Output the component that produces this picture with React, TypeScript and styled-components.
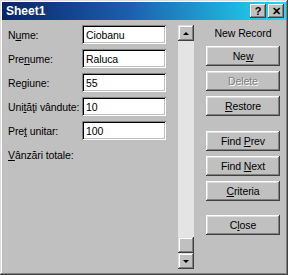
import React from 'react';
import styled, { createGlobalStyle } from 'styled-components';

const GlobalStyle = createGlobalStyle`
  html, body {
    margin: 0;
    padding: 0;
    background: #c0c0c0;
  }
  * {
    box-sizing: border-box;
  }
`;

const Window = styled.div`
  width: 288px;
  height: 275px;
  background: #c0c0c0;
  padding: 2px;
  box-shadow: inset -1px -1px 0 #404040, inset 1px 1px 0 #dfdfdf,
    inset -2px -2px 0 #808080, inset 2px 2px 0 #ffffff;
  font-family: 'Liberation Sans', Arial, sans-serif;
  font-size: 10.5px;
  letter-spacing: -0.1px;
  color: #000;
  display: flex;
  flex-direction: column;
`;

const TitleBar = styled.div`
  height: 18px;
  display: flex;
  align-items: center;
  padding: 0 2px 0 4px;
  background: linear-gradient(to right, #0a246a 0%, #1c5fae 45%, #22dcf4 100%);
`;

const Title = styled.span`
  flex: 1;
  color: #fff;
  font-weight: bold;
  font-size: 12px;
  letter-spacing: 0;
`;

const CaptionButton = styled.div<{ gap?: number }>`
  width: 16px;
  height: 14px;
  background: #c0c0c0;
  box-shadow: inset -1px -1px 0 #404040, inset 1px 1px 0 #ffffff,
    inset -2px -2px 0 #808080;
  display: flex;
  align-items: center;
  justify-content: center;
  font-weight: bold;
  font-size: 11px;
  margin-left: ${(p) => p.gap ?? 0}px;
`;

const Body = styled.div`
  flex: 1;
  display: flex;
  padding: 5px 6px 0 6px;
`;

const Form = styled.div`
  display: grid;
  grid-template-columns: 74px 84px;
  grid-auto-rows: 19px;
  row-gap: 5px;
  align-items: center;
  align-content: start;
  margin-right: 12px;
`;

const Label = styled.span`
  white-space: nowrap;
`;

const Field = styled.div`
  height: 19px;
  background: #fff;
  padding: 0 4px;
  display: flex;
  align-items: center;
  box-shadow: inset 1px 1px 0 #808080, inset -1px -1px 0 #ffffff,
    inset 2px 2px 0 #000000, inset -2px -2px 0 #c0c0c0;
`;

const ScrollBar = styled.div`
  width: 16px;
  height: 244px;
  display: flex;
  flex-direction: column;
  background: #e4e4e4;
  margin-right: 12px;
`;

const ScrollButton = styled.div`
  width: 16px;
  height: 16px;
  flex-shrink: 0;
  background: #c0c0c0;
  box-shadow: inset -1px -1px 0 #404040, inset 1px 1px 0 #dfdfdf,
    inset -2px -2px 0 #808080, inset 2px 2px 0 #ffffff;
  display: flex;
  align-items: center;
  justify-content: center;
`;

const Track = styled.div`
  flex: 1;
`;

const Arrow = styled.div<{ down?: boolean }>`
  width: 0;
  height: 0;
  border-left: 3px solid transparent;
  border-right: 3px solid transparent;
  ${(p) =>
    p.down ? 'border-top: 3px solid #000;' : 'border-bottom: 3px solid #000;'}
`;

const Actions = styled.div`
  width: 74px;
  display: flex;
  flex-direction: column;
`;

const RecordLabel = styled.div`
  height: 16px;
  display: flex;
  align-items: center;
  justify-content: center;
`;

const Button = styled.div<{ space?: number; disabled?: boolean }>`
  height: 20px;
  margin-top: ${(p) => p.space ?? 5}px;
  background: #c0c0c0;
  box-shadow: inset -1px -1px 0 #404040, inset 1px 1px 0 #ffffff,
    inset -2px -2px 0 #808080, inset 2px 2px 0 #dfdfdf;
  display: flex;
  align-items: center;
  justify-content: center;
  color: ${(p) => (p.disabled ? '#808080' : '#000')};
  text-shadow: ${(p) => (p.disabled ? '1px 1px 0 #ffffff' : 'none')};
`;

const Key = styled.span`
  text-decoration: underline;
`;

const fields: [React.ReactNode, string][] = [
  [<>N<Key>u</Key>me:</>, 'Ciobanu'],
  [<>Pre<Key>n</Key>ume:</>, 'Raluca'],
  [<>Re<Key>g</Key>iune:</>, '55'],
  [<>Uni<Key>t</Key>ăţi vândute:</>, '10'],
  [<>Pre<Key>ţ</Key> unitar:</>, '100'],
];

export default function App() {
  return (
    <>
      <GlobalStyle />
      <Window>
        <TitleBar>
          <Title>Sheet1</Title>
          <CaptionButton>?</CaptionButton>
          <CaptionButton gap={2}>✕</CaptionButton>
        </TitleBar>
        <Body>
          <Form>
            {fields.map(([label, value], i) => (
              <React.Fragment key={i}>
                <Label>{label}</Label>
                <Field>{value}</Field>
              </React.Fragment>
            ))}
            <Label>
              <Key>V</Key>ânzări totale:
            </Label>
          </Form>
          <ScrollBar>
            <ScrollButton>
              <Arrow />
            </ScrollButton>
            <Track />
            <ScrollButton />
            <ScrollButton>
              <Arrow down />
            </ScrollButton>
          </ScrollBar>
          <Actions>
            <RecordLabel>New Record</RecordLabel>
            <Button>
              <span>
                Ne<Key>w</Key>
              </span>
            </Button>
            <Button disabled>
              <span>Delete</span>
            </Button>
            <Button>
              <span>
                <Key>R</Key>estore
              </span>
            </Button>
            <Button space={15}>
              <span>
                Find <Key>P</Key>rev
              </span>
            </Button>
            <Button>
              <span>
                Find <Key>N</Key>ext
              </span>
            </Button>
            <Button>
              <span>
                <Key>C</Key>riteria
              </span>
            </Button>
            <Button space={14}>
              <span>
                C<Key>l</Key>ose
              </span>
            </Button>
          </Actions>
        </Body>
      </Window>
    </>
  );
}
